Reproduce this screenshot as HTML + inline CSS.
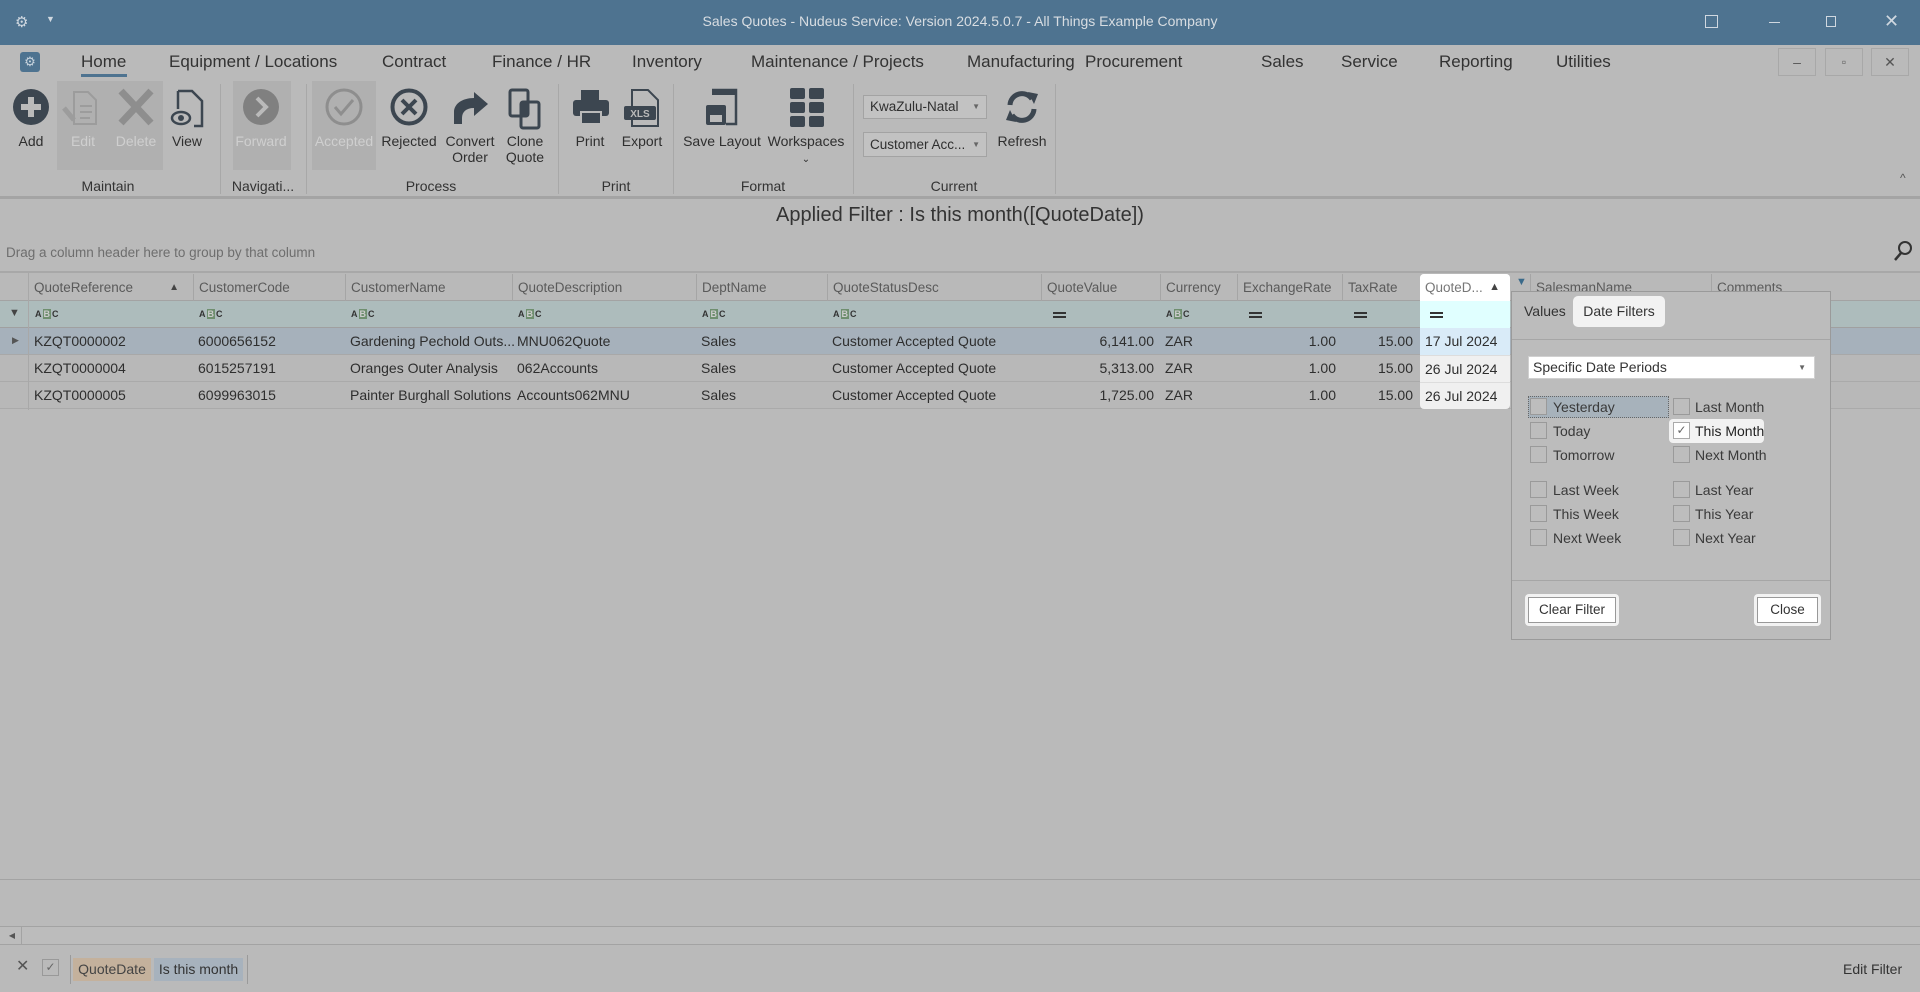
<!DOCTYPE html>
<html><head><meta charset="utf-8"><style>
*{margin:0;padding:0;box-sizing:border-box}
body{width:1920px;height:992px;background:#bababa;font-family:"Liberation Sans",sans-serif;color:#2f2f2f;position:relative;overflow:hidden;font-size:14px}
.a{position:absolute;white-space:nowrap}
.tab{position:absolute;top:52px;font-size:17px;color:#333}
.lbl{position:absolute;font-size:14px;text-align:center;width:80px;line-height:16px}
.grp{position:absolute;top:178px;font-size:14px;text-align:center;color:#333}
.sep{position:absolute;top:84px;width:1px;height:110px;background:#a8a8a8}
.ico{position:absolute;top:88px}
.hc{position:absolute;top:274px;height:27px;line-height:27px;font-size:13.5px;color:#5a5a5a;border-left:1px solid #a5a5a5;padding-left:5px}
.cell{position:absolute;height:27px;line-height:27px;font-size:14px;padding-left:5px;color:#2e2e2e}
.r{text-align:right;padding-right:6px;padding-left:0}
.abc{position:absolute;top:309px;font-size:9px;font-weight:bold;color:#333}
.abc b{background:#6f8f6f;color:#ccc;padding:0 1px;margin:0 1px}
.eq{position:absolute;top:312px;width:13px;height:6px;border-top:2px solid #333;border-bottom:2px solid #333}
.cb{position:absolute;width:17px;height:17px;border:1px solid #9a9a9a;background:#bdbdbd}
.ct{position:absolute;font-size:14px;color:#3a3a3a}
</style></head><body>
<!-- title -->
<div class="a" style="left:0;top:0;width:1920px;height:45px;background:#4e7390"></div>
<div class="a" style="left:15px;top:13px;color:#d0d8e0;font-size:15px">⚙</div>
<div class="a" style="left:46px;top:14px;color:#d0d8e0;font-size:9px">▼</div>
<div class="a" style="left:0;top:13px;width:1920px;text-align:center;color:#d8dde2;font-size:14px">Sales Quotes - Nudeus Service: Version 2024.5.0.7 - All Things Example Company</div>
<div class="a" style="left:1705px;top:15px;width:13px;height:13px;border:1px solid #d0d8e0"></div>
<div class="a" style="left:1769px;top:22px;width:11px;height:1px;background:#d0d8e0"></div>
<div class="a" style="left:1826px;top:16px;width:10px;height:11px;border:1px solid #d0d8e0"></div>
<div class="a" style="left:1884px;top:11px;color:#d0d8e0;font-size:18px">✕</div>
<!-- menu row -->
<div class="a" style="left:20px;top:52px;width:20px;height:20px;background:#4e7390;border-radius:3px;color:#c8d4de;font-size:13px;text-align:center;line-height:20px">⚙</div>
<div class="tab" style="left:81px">Home</div>
<div class="a" style="left:81px;top:74px;width:46px;height:3px;background:#4e7390"></div>
<div class="tab" style="left:169px">Equipment / Locations</div>
<div class="tab" style="left:382px">Contract</div>
<div class="tab" style="left:492px">Finance / HR</div>
<div class="tab" style="left:632px">Inventory</div>
<div class="tab" style="left:751px">Maintenance / Projects</div>
<div class="tab" style="left:967px">Manufacturing</div>
<div class="tab" style="left:1085px">Procurement</div>
<div class="tab" style="left:1261px">Sales</div>
<div class="tab" style="left:1341px">Service</div>
<div class="tab" style="left:1439px">Reporting</div>
<div class="tab" style="left:1556px">Utilities</div>
<div class="a" style="left:1778px;top:48px;width:38px;height:28px;border:1px solid #a8a8a8;text-align:center;line-height:26px;color:#555">–</div>
<div class="a" style="left:1825px;top:48px;width:38px;height:28px;border:1px solid #a8a8a8;text-align:center;line-height:26px;color:#555;font-size:12px">▫</div>
<div class="a" style="left:1871px;top:48px;width:38px;height:28px;border:1px solid #a8a8a8;text-align:center;line-height:26px;color:#555">✕</div>
<!-- ribbon disabled boxes -->
<div class="a" style="left:57px;top:81px;width:106px;height:89px;background:#b0b0b0"></div>
<div class="a" style="left:233px;top:81px;width:58px;height:89px;background:#b0b0b0"></div>
<div class="a" style="left:312px;top:81px;width:64px;height:89px;background:#b0b0b0"></div>
<div class="sep" style="left:220px"></div><div class="sep" style="left:306px"></div><div class="sep" style="left:558px"></div><div class="sep" style="left:673px"></div><div class="sep" style="left:853px"></div><div class="sep" style="left:1055px"></div>
<!-- icons -->
<svg class="ico" style="left:12px" width="38" height="38"><circle cx="19" cy="19" r="18" fill="#3c4650"/><path d="M19 9v20M9 19h20" stroke="#bababa" stroke-width="6"/></svg>
<svg class="ico" style="left:62px" width="40" height="38"><path d="M12 4h14l8 8v24H12z" fill="none" stroke="#9c9c9c" stroke-width="2"/><path d="M18 18h12M18 24h12M18 30h10" stroke="#9c9c9c" stroke-width="2"/><path d="M2 20l10 12" stroke="#9c9c9c" stroke-width="5"/></svg>
<svg class="ico" style="left:116px" width="40" height="38"><path d="M5 3l30 32M35 3L5 35" stroke="#8e8e8e" stroke-width="7"/></svg>
<svg class="ico" style="left:170px" width="36" height="40"><path d="M8 3h14l10 10v25h-8M8 3v18" fill="none" stroke="#3c4650" stroke-width="2.5"/><ellipse cx="11" cy="30" rx="9" ry="6" fill="none" stroke="#3c4650" stroke-width="2.5"/><circle cx="11" cy="30" r="3" fill="#3c4650"/></svg>
<svg class="ico" style="left:242px" width="38" height="38"><circle cx="19" cy="19" r="18" fill="#808080"/><path d="M15 10l9 9-9 9" fill="none" stroke="#bababa" stroke-width="4"/></svg>
<svg class="ico" style="left:325px" width="38" height="38"><circle cx="19" cy="19" r="17" fill="none" stroke="#8e8e8e" stroke-width="3"/><path d="M10 19l6 7 12-14" fill="none" stroke="#8e8e8e" stroke-width="3"/></svg>
<svg class="ico" style="left:390px" width="38" height="38"><circle cx="19" cy="19" r="16.5" fill="none" stroke="#3c4650" stroke-width="4"/><path d="M12 12l14 14M26 12L12 26" stroke="#3c4650" stroke-width="4"/></svg>
<svg class="ico" style="left:450px" width="42" height="38"><path d="M4 36V24c0-8 8-14 20-14V4l14 12-14 12v-8c-8 0-12 4-12 10v6z" fill="#3c4650"/></svg>
<svg class="ico" style="left:507px" width="36" height="42"><rect x="3" y="2" width="18" height="26" rx="2" fill="none" stroke="#3c4650" stroke-width="3"/><rect x="14" y="14" width="18" height="26" rx="2" fill="none" stroke="#3c4650" stroke-width="3"/><rect x="14" y="14" width="7" height="14" fill="#3c4650"/></svg>
<svg class="ico" style="left:571px" width="40" height="38"><rect x="10" y="2" width="18" height="10" fill="#3c4650"/><rect x="2" y="12" width="36" height="16" rx="3" fill="#3c4650"/><rect x="10" y="24" width="20" height="12" fill="#3c4650" stroke="#bababa" stroke-width="2"/></svg>
<svg class="ico" style="left:622px" width="40" height="40"><path d="M10 2h16l10 10v26H10z" fill="none" stroke="#3c4650" stroke-width="2"/><rect x="2" y="18" width="32" height="14" rx="2" fill="#3c4650"/><text x="18" y="29" font-size="10" font-weight="bold" fill="#bababa" text-anchor="middle" font-family="Liberation Sans">XLS</text></svg>
<svg class="ico" style="left:704px" width="38" height="40"><path d="M8 2h24v34H22" fill="none" stroke="#3c4650" stroke-width="2.5"/><rect x="8" y="2" width="24" height="5" fill="#3c4650"/><rect x="2" y="17" width="20" height="20" rx="2" fill="#3c4650"/><rect x="6" y="27" width="12" height="7" fill="#bababa"/></svg>
<svg class="ico" style="left:790px" width="34" height="40"><rect x="0" y="0" width="15" height="11" rx="2" fill="#3c4650"/><rect x="19" y="0" width="15" height="11" rx="2" fill="#3c4650"/><rect x="0" y="14" width="15" height="11" rx="2" fill="#3c4650"/><rect x="19" y="14" width="15" height="11" rx="2" fill="#3c4650"/><rect x="0" y="28" width="15" height="11" rx="2" fill="#3c4650"/><rect x="19" y="28" width="15" height="11" rx="2" fill="#3c4650"/></svg>
<svg class="ico" style="left:1002px" width="40" height="38"><path d="M8 17a12 12 0 0 1 22-6" fill="none" stroke="#3c4650" stroke-width="5"/><path d="M26 4l10 2-4 10z" fill="#3c4650"/><path d="M32 21a12 12 0 0 1-22 6" fill="none" stroke="#3c4650" stroke-width="5"/><path d="M14 34L4 32l4-10z" fill="#3c4650"/></svg>
<!-- labels -->
<div class="lbl" style="left:-9px;top:133px">Add</div>
<div class="lbl" style="left:43px;top:133px;color:#cfcfcf">Edit</div>
<div class="lbl" style="left:96px;top:133px;color:#cfcfcf">Delete</div>
<div class="lbl" style="left:147px;top:133px">View</div>
<div class="lbl" style="left:221px;top:133px;color:#cfcfcf">Forward</div>
<div class="lbl" style="left:304px;top:133px;color:#cfcfcf">Accepted</div>
<div class="lbl" style="left:369px;top:133px">Rejected</div>
<div class="lbl" style="left:430px;top:133px">Convert<br>Order</div>
<div class="lbl" style="left:485px;top:133px">Clone<br>Quote</div>
<div class="lbl" style="left:550px;top:133px">Print</div>
<div class="lbl" style="left:602px;top:133px">Export</div>
<div class="lbl" style="left:682px;top:133px;width:80px">Save Layout</div>
<div class="lbl" style="left:766px;top:133px">Workspaces<br><span style="font-size:10px">⌄</span></div>
<div class="lbl" style="left:982px;top:133px">Refresh</div>
<div class="a" style="left:863px;top:95px;width:124px;height:24px;background:#c2c2c2;border:1px solid #a3a3a3;font-size:13.5px;line-height:22px;padding-left:6px">KwaZulu-Natal<span style="position:absolute;right:6px;font-size:8px;color:#666">▼</span></div>
<div class="a" style="left:863px;top:132px;width:124px;height:25px;background:#c2c2c2;border:1px solid #a3a3a3;font-size:13.5px;line-height:23px;padding-left:6px">Customer Acc...<span style="position:absolute;right:6px;font-size:8px;color:#666">▼</span></div>
<div class="grp" style="left:62px;width:92px">Maintain</div>
<div class="grp" style="left:224px;width:78px">Navigati...</div>
<div class="grp" style="left:391px;width:80px">Process</div>
<div class="grp" style="left:560px;width:112px">Print</div>
<div class="grp" style="left:723px;width:80px">Format</div>
<div class="grp" style="left:914px;width:80px">Current</div>
<div class="a" style="left:1900px;top:171px;font-size:12px;color:#555">^</div>
<div class="a" style="left:0;top:196px;width:1920px;height:3px;background:#a4a4a4"></div>
<!-- filter title -->
<div class="a" style="left:0;top:204px;width:1920px;text-align:center;font-size:20px;color:#333">Applied Filter : Is this month([QuoteDate])</div>
<div class="a" style="left:6px;top:245px;font-size:13.5px;color:#6e6e6e">Drag a column header here to group by that column</div>
<svg class="a" style="left:1893px;top:240px" width="20" height="22"><circle cx="12" cy="8" r="6" fill="none" stroke="#333" stroke-width="2"/><path d="M8 13l-6 7" stroke="#333" stroke-width="2.5"/></svg>
<div class="a" style="left:0;top:271px;width:1920px;height:2px;background:#a8a8a8"></div>
<!-- grid -->
<div class="a" style="left:0;top:273px;width:1920px;height:28px;background:#b9b9b9;border-bottom:1px solid #a3a3a3"></div>
<div class="a" style="left:0;top:301px;width:1920px;height:27px;background:#adbcbc;border-bottom:1px solid #a0a0a0"></div>
<div class="a" style="left:0;top:328px;width:1920px;height:27px;background:#a6b1bb;border-bottom:1px solid #a8a8a8"></div>
<div class="a" style="left:0;top:355px;width:1920px;height:27px;background:#b8b8b8;border-bottom:1px solid #aaa"></div>
<div class="a" style="left:0;top:382px;width:1920px;height:27px;background:#b8b8b8;border-bottom:1px solid #aaa"></div>
<div class="a" style="left:28px;top:273px;width:1px;height:137px;background:#a8a8a8"></div>
<div class="hc" style="left:29px;width:164px;border-left:none">QuoteReference<span style="position:absolute;right:14px;font-size:10px;color:#444">▲</span></div>
<div class="hc" style="left:193px">CustomerCode</div>
<div class="hc" style="left:345px">CustomerName</div>
<div class="hc" style="left:512px">QuoteDescription</div>
<div class="hc" style="left:696px">DeptName</div>
<div class="hc" style="left:827px">QuoteStatusDesc</div>
<div class="hc" style="left:1041px">QuoteValue</div>
<div class="hc" style="left:1160px">Currency</div>
<div class="hc" style="left:1237px">ExchangeRate</div>
<div class="hc" style="left:1342px">TaxRate</div>
<div class="hc" style="left:1530px">SalesmanName</div>
<div class="hc" style="left:1711px">Comments</div>
<div class="a" style="left:1516px;top:276px;font-size:11px;color:#3a6a8a">▼</div>
<div class="a" style="left:9px;top:307px;font-size:11px;color:#444">▼</div>
<div class="abc" style="left:35px">A<b>B</b>C</div><div class="abc" style="left:199px">A<b>B</b>C</div><div class="abc" style="left:351px">A<b>B</b>C</div><div class="abc" style="left:518px">A<b>B</b>C</div><div class="abc" style="left:702px">A<b>B</b>C</div><div class="abc" style="left:833px">A<b>B</b>C</div><div class="abc" style="left:1166px">A<b>B</b>C</div>
<div class="eq" style="left:1053px"></div><div class="eq" style="left:1249px"></div><div class="eq" style="left:1354px"></div>
<div class="a" style="left:12px;top:335px;font-size:9px;color:#555">▶</div>
<!-- rows -->
<div class="cell" style="left:29px;top:328px">KZQT0000002</div><div class="cell" style="left:193px;top:328px">6000656152</div><div class="cell" style="left:345px;top:328px">Gardening Pechold Outs...</div><div class="cell" style="left:512px;top:328px">MNU062Quote</div><div class="cell" style="left:696px;top:328px">Sales</div><div class="cell" style="left:827px;top:328px">Customer Accepted Quote</div><div class="cell r" style="left:1041px;top:328px;width:119px">6,141.00</div><div class="cell" style="left:1160px;top:328px">ZAR</div><div class="cell r" style="left:1237px;top:328px;width:105px">1.00</div><div class="cell r" style="left:1342px;top:328px;width:77px">15.00</div>
<div class="cell" style="left:29px;top:355px">KZQT0000004</div><div class="cell" style="left:193px;top:355px">6015257191</div><div class="cell" style="left:345px;top:355px">Oranges Outer Analysis</div><div class="cell" style="left:512px;top:355px">062Accounts</div><div class="cell" style="left:696px;top:355px">Sales</div><div class="cell" style="left:827px;top:355px">Customer Accepted Quote</div><div class="cell r" style="left:1041px;top:355px;width:119px">5,313.00</div><div class="cell" style="left:1160px;top:355px">ZAR</div><div class="cell r" style="left:1237px;top:355px;width:105px">1.00</div><div class="cell r" style="left:1342px;top:355px;width:77px">15.00</div>
<div class="cell" style="left:29px;top:382px">KZQT0000005</div><div class="cell" style="left:193px;top:382px">6099963015</div><div class="cell" style="left:345px;top:382px">Painter Burghall Solutions</div><div class="cell" style="left:512px;top:382px">Accounts062MNU</div><div class="cell" style="left:696px;top:382px">Sales</div><div class="cell" style="left:827px;top:382px">Customer Accepted Quote</div><div class="cell r" style="left:1041px;top:382px;width:119px">1,725.00</div><div class="cell" style="left:1160px;top:382px">ZAR</div><div class="cell r" style="left:1237px;top:382px;width:105px">1.00</div><div class="cell r" style="left:1342px;top:382px;width:77px">15.00</div>
<!-- highlighted QuoteDate column -->
<div class="a" style="left:1420px;top:274px;width:90px;height:135px;border-radius:4px;overflow:hidden;background:#f0f0f0">
<div class="a" style="left:0;top:0;width:90px;height:27px;background:#fff;font-size:13.5px;line-height:27px;padding-left:5px;color:#777">QuoteD...<span style="position:absolute;right:10px;font-size:11px;color:#444">▲</span></div>
<div class="a" style="left:0;top:27px;width:90px;height:27px;background:#e0ffff"><div class="eq" style="left:10px;top:11px;position:absolute"></div></div>
<div class="a" style="left:0;top:54px;width:90px;height:27px;background:#d9ebf8;font-size:14px;line-height:27px;padding-left:5px">17 Jul 2024</div>
<div class="a" style="left:0;top:81px;width:90px;height:27px;font-size:14px;line-height:27px;padding-left:5px;border-top:1px solid #ddd">26 Jul 2024</div>
<div class="a" style="left:0;top:108px;width:90px;height:27px;font-size:14px;line-height:27px;padding-left:5px;border-top:1px solid #ddd">26 Jul 2024</div>
</div>
<!-- popup -->
<div class="a" style="left:1511px;top:291px;width:320px;height:349px;background:#bcbcbc;border:1px solid #9a9a9a"></div>
<div class="a" style="left:1524px;top:303px;font-size:14px;color:#333">Values</div>
<div class="a" style="left:1573px;top:296px;width:92px;height:31px;background:#f2f2f2;border-radius:5px;font-size:14px;line-height:30px;text-align:center;color:#333">Date Filters</div>
<div class="a" style="left:1512px;top:339px;width:318px;height:1px;background:#a6a6a6"></div>
<div class="a" style="left:1528px;top:356px;width:287px;height:23px;background:#fff;border:1px solid #d0d0d0;font-size:14px;line-height:21px;padding-left:4px;color:#333">Specific Date Periods<span style="position:absolute;right:8px;font-size:8px;color:#666">▼</span></div>
<div class="a" style="left:1528px;top:396px;width:141px;height:22px;background:#a7b2bb;border:1px dotted #666"></div>
<div class="a" style="left:1669px;top:419px;width:95px;height:24px;background:#f2f2f2;border-radius:4px"></div>
<div class="cb" style="left:1530px;top:398px"></div><div class="ct" style="left:1553px;top:399px">Yesterday</div>
<div class="cb" style="left:1530px;top:422px"></div><div class="ct" style="left:1553px;top:423px">Today</div>
<div class="cb" style="left:1530px;top:446px"></div><div class="ct" style="left:1553px;top:447px">Tomorrow</div>
<div class="cb" style="left:1530px;top:481px"></div><div class="ct" style="left:1553px;top:482px">Last Week</div>
<div class="cb" style="left:1530px;top:505px"></div><div class="ct" style="left:1553px;top:506px">This Week</div>
<div class="cb" style="left:1530px;top:529px"></div><div class="ct" style="left:1553px;top:530px">Next Week</div>
<div class="cb" style="left:1673px;top:398px"></div><div class="ct" style="left:1695px;top:399px">Last Month</div>
<div class="cb" style="left:1673px;top:422px;background:#fff;border-color:#aaa;font-size:12px;line-height:15px;text-align:center;color:#666">✓</div><div class="ct" style="left:1695px;top:423px;color:#222">This Month</div>
<div class="cb" style="left:1673px;top:446px"></div><div class="ct" style="left:1695px;top:447px">Next Month</div>
<div class="cb" style="left:1673px;top:481px"></div><div class="ct" style="left:1695px;top:482px">Last Year</div>
<div class="cb" style="left:1673px;top:505px"></div><div class="ct" style="left:1695px;top:506px">This Year</div>
<div class="cb" style="left:1673px;top:529px"></div><div class="ct" style="left:1695px;top:530px">Next Year</div>
<div class="a" style="left:1512px;top:580px;width:318px;height:1px;background:#a6a6a6"></div>
<div class="a" style="left:1525px;top:594px;width:94px;height:32px;background:#f2f2f2;border-radius:4px;padding:3px"><div style="width:100%;height:100%;background:#fff;border:1px solid #999;font-size:13.5px;line-height:24px;text-align:center;color:#333">Clear Filter</div></div>
<div class="a" style="left:1754px;top:594px;width:67px;height:32px;background:#f2f2f2;border-radius:4px;padding:3px"><div style="width:100%;height:100%;background:#fff;border:1px solid #999;font-size:13.5px;line-height:24px;text-align:center;color:#333">Close</div></div>
<!-- bottom -->
<div class="a" style="left:0;top:879px;width:1920px;height:1px;background:#a3a3a3"></div>
<div class="a" style="left:0;top:926px;width:1920px;height:19px;border-top:1px solid #a3a3a3;border-bottom:1px solid #a3a3a3;background:#bcbcbc"></div>
<div class="a" style="left:3px;top:927px;width:19px;height:17px;border-right:1px solid #a3a3a3;font-size:8px;color:#555;line-height:17px;text-align:center">◀</div>
<div class="a" style="left:16px;top:956px;font-size:16px;color:#555">✕</div>
<div class="a" style="left:42px;top:959px;width:17px;height:17px;border:1px solid #999;font-size:12px;color:#666;text-align:center;line-height:15px">✓</div>
<div class="a" style="left:70px;top:955px;width:178px;height:29px;border:1px solid #9a9a9a;border-top:none;border-bottom:none"></div>
<div class="a" style="left:73px;top:958px;width:78px;height:23px;background:#c4b19c;font-size:14px;line-height:23px;text-align:center;color:#444">QuoteDate</div>
<div class="a" style="left:154px;top:958px;width:89px;height:23px;background:#a7b2bd;font-size:14px;line-height:23px;text-align:center;color:#333">Is this month</div>
<div class="a" style="left:1843px;top:961px;font-size:14px;color:#333">Edit Filter</div>
</body></html>
